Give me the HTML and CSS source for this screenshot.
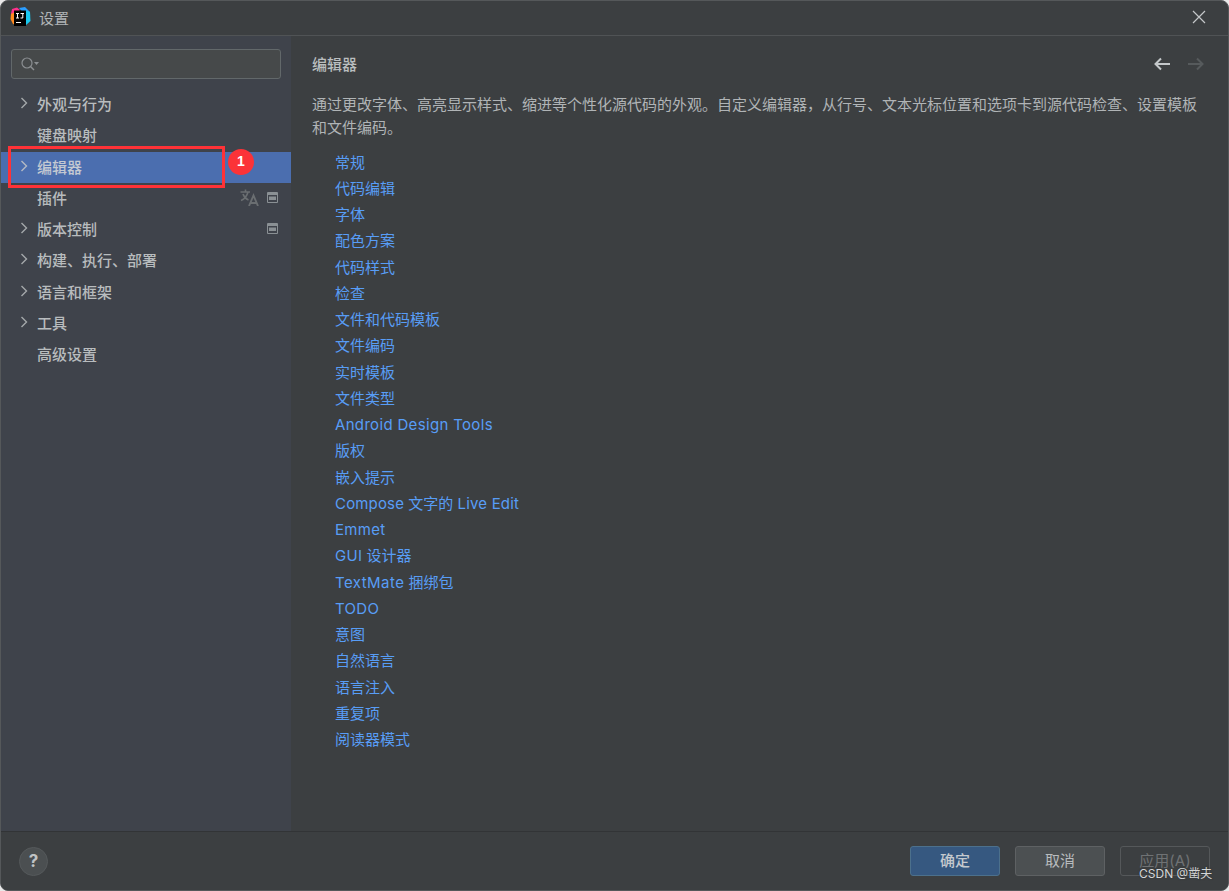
FILE: index.html
```html
<!DOCTYPE html>
<html>
<head>
    <title>设置</title>
    <meta charset="UTF-8">
    <link rel="stylesheet" href="styles.css">
</head>
<body>
    <div class="window">
        <div class="titlebar">
            <svg class="app-logo" width="21" height="20" viewBox="0 0 21 20">
                <path d="M2 2 L7 0.500 L10 3 L4 9 L1 7 Z" fill="#ff318c"/>
                <path d="M1 7 L5 5 L6 18 L3 17 L0.500 12 Z" fill="#ff8a1f"/>
                <path d="M9 1 L15 0 L20 5 L16 9 Z" fill="#2a9dff"/>
                <path d="M15 3 L20 5 L20.500 14 L15 19 Z" fill="#18c8f0"/>
                <rect x="4" y="3.500" width="12" height="15.500" fill="#000"/>
                <path d="M6 6.500 H9 M7.500 6.500 V11 M6 11 H9 M10.500 6.500 H14 M12.800 6.500 V11 H10.500" stroke="#fff" stroke-width="1" fill="none"/>
                <rect x="6" y="15" width="5" height="1" fill="#fff"/>
            </svg>
            <span class="title">设置</span>
            <svg class="close" width="14" height="14" viewBox="0 0 14 14">
                <path d="M1 1 L13 13 M13 1 L1 13" stroke="#c4c7c9" stroke-width="1.200" fill="none"/>
            </svg>
        </div>

        <div class="main">
            <div class="sidebar">
                <div class="search">
                    <svg width="24" height="16" viewBox="0 0 24 16">
                        <circle cx="8" cy="7" r="5" stroke="#8b8f92" stroke-width="1.200" fill="none"/>
                        <path d="M11.500 10.500 L15 14" stroke="#8b8f92" stroke-width="1.400"/>
                        <path d="M15 6 H20 L17.500 9 Z" fill="#8b8f92"/>
                    </svg>
                </div>
                <div class="tree">
                    <div class="row"><svg class="arrow" width="8" height="12" viewBox="0 0 8 12"><path d="M1.500 1 L6.500 6 L1.500 11" stroke="#a4a8aa" stroke-width="1.400" fill="none"/></svg>外观与行为</div>
                    <div class="row">键盘映射</div>
                    <div class="row selected"><svg class="arrow" width="8" height="12" viewBox="0 0 8 12"><path d="M1.500 1 L6.500 6 L1.500 11" stroke="#b4bac4" stroke-width="1.400" fill="none"/></svg>编辑器</div>
                    <div class="row">插件
                        <span class="row-icons">
                            <svg width="19" height="17" viewBox="0 0 19 17">
                                <path d="M0.500 3 H10 M5.500 0.500 V3 M8 3 C7 7 4.500 10 1 11.500 M3 5 C4 8 6 10 8.500 11" stroke="#6a6e71" stroke-width="1.600" fill="none"/>
                                <path d="M9 17 L13.500 6.500 L18 17 M10.500 14 H16.500" stroke="#6a6e71" stroke-width="1.900" fill="none"/>
                            </svg>
                            <svg width="11" height="11" viewBox="0 0 11 11"><rect width="11" height="11" rx="1" fill="#8a9094"/><rect x="1" y="3" width="9" height="7" fill="#3f434b"/><rect x="2" y="4.500" width="7" height="3.500" fill="#8a9094"/></svg>
                        </span>
                    </div>
                    <div class="row"><svg class="arrow" width="8" height="12" viewBox="0 0 8 12"><path d="M1.500 1 L6.500 6 L1.500 11" stroke="#a4a8aa" stroke-width="1.400" fill="none"/></svg>版本控制
                        <span class="row-icons">
                            <svg width="11" height="11" viewBox="0 0 11 11"><rect width="11" height="11" rx="1" fill="#8a9094"/><rect x="1" y="3" width="9" height="7" fill="#3f434b"/><rect x="2" y="4.500" width="7" height="3.500" fill="#8a9094"/></svg>
                        </span>
                    </div>
                    <div class="row"><svg class="arrow" width="8" height="12" viewBox="0 0 8 12"><path d="M1.500 1 L6.500 6 L1.500 11" stroke="#a4a8aa" stroke-width="1.400" fill="none"/></svg>构建、执行、部署</div>
                    <div class="row"><svg class="arrow" width="8" height="12" viewBox="0 0 8 12"><path d="M1.500 1 L6.500 6 L1.500 11" stroke="#a4a8aa" stroke-width="1.400" fill="none"/></svg>语言和框架</div>
                    <div class="row"><svg class="arrow" width="8" height="12" viewBox="0 0 8 12"><path d="M1.500 1 L6.500 6 L1.500 11" stroke="#a4a8aa" stroke-width="1.400" fill="none"/></svg>工具</div>
                    <div class="row">高级设置</div>
                </div>
            </div>

            <div class="content">
                <div class="content-head">
                    <span class="content-title">编辑器</span>
                    <span class="nav">
                        <svg width="18" height="14" viewBox="0 0 18 14"><path d="M17 7 H3 M8 1.500 L2.500 7 L8 12.500" stroke="#c4c8ca" stroke-width="2" fill="none"/></svg>
                        <svg width="18" height="14" viewBox="0 0 18 14"><path d="M1 7 H15 M10 1.500 L15.500 7 L10 12.500" stroke="#565a5c" stroke-width="2" fill="none"/></svg>
                    </span>
                </div>
                <p class="desc">通过更改字体、高亮显示样式、缩进等个性化源代码的外观。自定义编辑器，从行号、文本光标位置和选项卡到源代码检查、设置模板和文件编码。</p>
                <div class="links">
                    <a>常规</a>
                    <a>代码编辑</a>
                    <a>字体</a>
                    <a>配色方案</a>
                    <a>代码样式</a>
                    <a>检查</a>
                    <a>文件和代码模板</a>
                    <a>文件编码</a>
                    <a>实时模板</a>
                    <a>文件类型</a>
                    <a><span class="lat">Android Design Tools</span></a>
                    <a>版权</a>
                    <a>嵌入提示</a>
                    <a><span class="lat narrow">Compose</span> 文字的 <span class="lat narrow">Live Edit</span></a>
                    <a><span class="lat">Emmet</span></a>
                    <a><span class="lat">GUI</span> 设计器</a>
                    <a><span class="lat wide">TextMate</span> 捆绑包</a>
                    <a><span class="lat">TODO</span></a>
                    <a>意图</a>
                    <a>自然语言</a>
                    <a>语言注入</a>
                    <a>重复项</a>
                    <a>阅读器模式</a>
                </div>
            </div>
        </div>

        <div class="footer">
            <div class="help">?</div>
            <div class="buttons">
                <div class="btn primary">确定</div>
                <div class="btn">取消</div>
                <div class="btn disabled">应用(A)</div>
            </div>
        </div>
    </div>

    <div class="mark-box"></div>
    <div class="mark-badge">1</div>
    <div class="watermark">CSDN @凿夫</div>
</body>
</html>
```

FILE: styles.css
```css
html, body {
    margin: 0;
    padding: 0;
    background-color: #e9e9e9;
}
body {
    font-family: "Inter", "Noto Sans CJK SC", sans-serif;
    font-size: 15px;
    color: #b4b8ba;
    width: 1229px;
    height: 891px;
    overflow: hidden;
}
.window {
    box-sizing: border-box;
    width: 1229px;
    height: 891px;
    display: flex;
    flex-direction: column;
    background-color: #3c3f41;
    border: 1px solid #55585a;
    border-radius: 8px;
    overflow: hidden;
}
.titlebar {
    flex: none;
    display: flex;
    align-items: center;
    padding: 0 22px 2px 9px;
    height: 32px;
    border-bottom: 1px solid #505355;
}
.app-logo {
    margin-right: 8px;
}
.title {
    font-size: 15px;
    color: #b0b4b6;
}
.close {
    margin-left: auto;
}
.main {
    flex: 1;
    display: flex;
    min-height: 0;
}
.sidebar {
    width: 290px;
    flex: none;
    background-color: #3f434b;
}
.search {
    box-sizing: border-box;
    height: 30px;
    margin: 13px 10px 0 10px;
    padding: 6px 0 0 7px;
    background-color: #46494a;
    border: 1px solid #62686a;
    border-radius: 3px;
}
.tree {
    margin-top: 10px;
}
.row {
    box-sizing: border-box;
    height: 31.25px;
    padding-bottom: 2px;
    display: flex;
    align-items: center;
    padding-left: 36px;
    position: relative;
    font-weight: 500;
    color: #b8bcbe;
}
.row.selected {
    background-color: #4b6eaf;
    color: #c4c9d2;
}
.arrow {
    position: absolute;
    left: 19px;
    top: 8px;
}
.row-icons {
    margin-left: auto;
    margin-right: 13px;
    display: flex;
    align-items: center;
    gap: 8px;
}
.content {
    flex: 1;
    padding: 0 21px;
}
.content-head {
    display: flex;
    justify-content: space-between;
    align-items: center;
    height: 24px;
    margin-top: 15px;
}
.content-title {
    font-weight: 500;
    color: #babebf;
}
.nav {
    display: flex;
    gap: 16px;
    margin-right: 2px;
    margin-top: 1px;
}
.desc {
    margin: 18px 0 0 0;
    line-height: 23px;
    color: #b0b4b6;
}
.links {
    margin-top: 10.5px;
    padding-left: 23px;
}
.links a {
    display: block;
    height: 26.25px;
    line-height: 26.25px;
    color: #589df6;
}
.lat {
    letter-spacing: 0.33px;
}
.lat.narrow {
    letter-spacing: 0.17px;
}
.lat.wide {
    letter-spacing: 0.45px;
}
.footer {
    height: 58px;
    flex: none;
    display: flex;
    align-items: center;
    justify-content: space-between;
    padding: 0 18px;
    border-top: 1px solid #323436;
    background-color: #3c3f41;
}
.help {
    box-sizing: border-box;
    width: 29px;
    height: 29px;
    border-radius: 50%;
    background-color: #4b4f51;
    border: 1px solid #55595b;
    color: #bfc2c4;
    font-size: 17px;
    font-weight: 700;
    text-align: center;
    line-height: 26px;
}
.buttons {
    display: flex;
    gap: 15px;
}
.btn {
    box-sizing: border-box;
    width: 90px;
    height: 30px;
    line-height: 28px;
    text-align: center;
    background-color: #4c5052;
    border: 1px solid #5e6163;
    border-radius: 3px;
    color: #b8bcbe;
}
.btn.primary {
    background-color: #365880;
    border-color: #4c708c;
    color: #c4c9ce;
    font-weight: 500;
}
.btn.disabled {
    background-color: transparent;
    border-color: #55585a;
    color: #6f7274;
}
.mark-box {
    position: absolute;
    box-sizing: border-box;
    left: 8px;
    top: 146px;
    width: 217px;
    height: 42px;
    border: 3px solid #ff3237;
}
.mark-badge {
    position: absolute;
    left: 228px;
    top: 149px;
    width: 26px;
    height: 26px;
    border-radius: 50%;
    background-color: #fb3338;
    color: #fff;
    font-family: "Liberation Sans", sans-serif;
    font-size: 14px;
    font-weight: 700;
    text-align: center;
    line-height: 24px;
}
.watermark {
    position: absolute;
    left: 1139px;
    top: 866px;
    font-size: 12px;
    line-height: 16px;
    color: #d4d6d7;
    text-shadow: 0 0 2px #2e3031;
    white-space: nowrap;
}
```
